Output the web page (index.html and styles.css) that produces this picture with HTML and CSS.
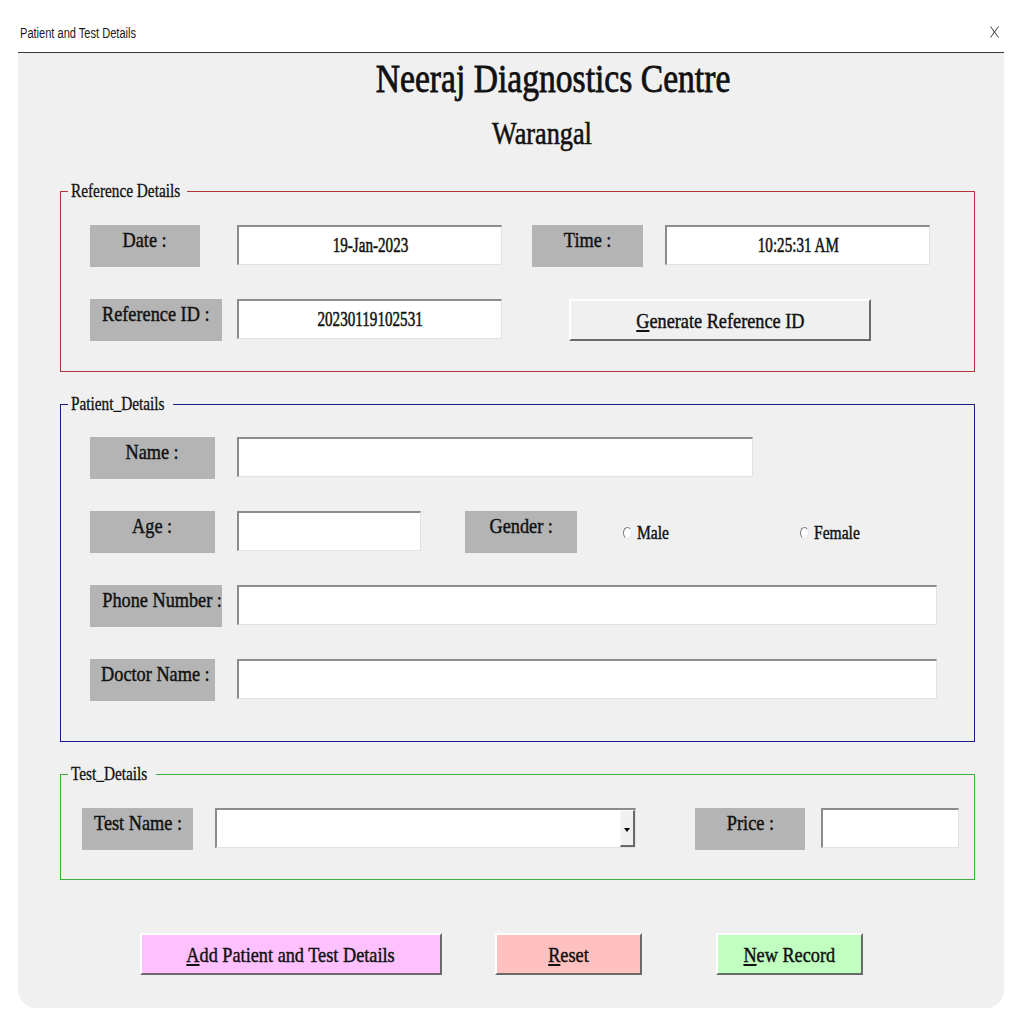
FILE: index.html
```html
<!DOCTYPE html>
<html>
<head>
<meta charset="utf-8">
<title>Patient and Test Details</title>
<link rel="stylesheet" href="styles.css">
</head>
<body>
<div class="window">
  <div class="titlebar">
    <span class="wtitle"><span class="c cl">Patient and Test Details</span></span>
    <svg class="close" width="9" height="12" viewBox="0 0 9 12"><path d="M0.5 0.5 L8.5 11.5 M8.5 0.5 L0.5 11.5" stroke="#333" stroke-width="1" fill="none"/></svg>
  </div>
  <div class="panel">
    <div class="heading"><span class="c">Neeraj Diagnostics Centre</span></div>
    <div class="sub"><span class="c">Warangal</span></div>

    <div class="group g1">
      <span class="legend lg1"><span class="c cl">Reference Details</span></span>
      <div class="row">
        <div class="lbl w110"><span class="c">Date :</span></div>
        <div class="inp ml37 w265"><span class="c ci">19-Jan-2023</span></div>
        <div class="lbl ml30 w111"><span class="c">Time :</span></div>
        <div class="inp ml22 w265"><span class="c ci">10:25:31 AM</span></div>
      </div>
      <div class="row">
        <div class="lbl w132"><span class="c">Reference ID :</span></div>
        <div class="inp ml15 w265"><span class="c ci">20230119102531</span></div>
        <div class="btn ml67 w302"><span class="c"><u>G</u>enerate Reference ID</span></div>
      </div>
    </div>

    <div class="group g2">
      <span class="legend lg2"><span class="c cl">Patient_Details</span></span>
      <div class="row">
        <div class="lbl w125"><span class="c">Name :</span></div>
        <div class="inp ml22 w516"></div>
      </div>
      <div class="row">
        <div class="lbl w125"><span class="c">Age :</span></div>
        <div class="inp ml22 w184"></div>
        <div class="lbl ml44 w112"><span class="c">Gender :</span></div>
        <div class="radio ml46 wr1"><span class="dot"></span><span class="rtext"><span class="c cl">Male</span></span></div>
        <div class="radio"><span class="dot"></span><span class="rtext"><span class="c cl">Female</span></span></div>
      </div>
      <div class="row">
        <div class="lbl w132"><span class="c">Phone Number :</span></div>
        <div class="inp ml15 w700"></div>
      </div>
      <div class="row">
        <div class="lbl w125"><span class="c">Doctor Name :</span></div>
        <div class="inp ml22 w700"></div>
      </div>
    </div>

    <div class="group g3">
      <span class="legend lg3"><span class="c cl">Test_Details</span></span>
      <div class="row">
        <div class="lbl w111"><span class="c">Test Name :</span></div>
        <div class="inp combo ml22 w421"><span class="ddbtn"><span class="tri"></span></span></div>
        <div class="lbl ml59 w110"><span class="c">Price :</span></div>
        <div class="inp ml16 w138"></div>
      </div>
    </div>

    <div class="actions">
      <div class="btn pink w302"><span class="c"><u>A</u>dd Patient and Test Details</span></div>
      <div class="btn rose ml53 w147"><span class="c"><u>R</u>eset</span></div>
      <div class="btn mint ml74 w147"><span class="c"><u>N</u>ew Record</span></div>
    </div>
  </div>
</div>
</body>
</html>
```

FILE: styles.css
```css
html, body {
  margin: 0;
  padding: 0;
  background: #ffffff;
}
body {
  font-family: "Liberation Serif", "Times New Roman", serif;
  color: #111;
}
.c {
  display: inline-block;
  white-space: nowrap;
  transform: scaleX(0.85);
  transform-origin: center;
}
.cl { transform-origin: left center; }

.window {
  margin-left: 18px;
  width: 986px;
}
.titlebar {
  height: 52px;
  border-bottom: 1px solid #3a3a3a;
  display: flex;
  justify-content: space-between;
  align-items: flex-start;
}
.wtitle {
  font-family: "Liberation Sans", Arial, sans-serif;
  font-size: 14px;
  line-height: 16px;
  margin: 25px 0 0 2px;
  color: #1a1a1a;
}
.wtitle .c { transform: scaleX(0.79); }
.close {
  margin: 26px 5px 0 0;
}

.panel {
  background: #f0f0f0;
  height: 955px;
  box-sizing: border-box;
  padding-top: 4px;
  border-radius: 0 0 18px 18px;
  overflow: hidden;
}
.heading {
  font-size: 40px;
  line-height: 44px;
  text-align: center;
  padding-left: 85px;
  -webkit-text-stroke: 0.8px #111;
}
.heading .c { transform: scaleX(0.84); }
.sub {
  font-size: 32px;
  line-height: 36px;
  margin-top: 14px;
  text-align: center;
  padding-left: 61px;
  -webkit-text-stroke: 0.6px #111;
}
.sub .c { transform: scaleX(0.82); }

.group {
  position: relative;
  margin-left: 42px;
  width: 915px;
  box-sizing: border-box;
  border: 1px solid;
  display: flex;
  flex-direction: column;
  gap: 32px;
}
.g1 {
  margin-top: 40px;
  height: 181px;
  border-color: #b3343a;
  padding: 33px 0 0 29px;
}
.g2 {
  margin-top: 32px;
  height: 338px;
  border-color: #1c1c86;
  padding: 32px 0 0 29px;
}
.g3 {
  margin-top: 32px;
  height: 106px;
  border-color: #3cae3c;
  padding: 33px 0 0 21px;
}
.legend {
  position: absolute;
  top: -11px;
  left: 7px;
  padding: 0 3px;
  background: #f0f0f0;
  font-size: 18px;
  line-height: 20px;
  white-space: nowrap;
  -webkit-text-stroke: 0.3px #111;
}
.legend .c { transform: scaleX(0.85); }
.lg1 { width: 113px; }
.lg2 { width: 99px; }
.lg3 { width: 82px; }

.row {
  display: flex;
  align-items: flex-start;
  height: 42px;
}
.lbl {
  flex: none;
  height: 42px;
  box-sizing: border-box;
  padding-top: 2px;
  background: #b4b4b4;
  text-align: center;
  font-size: 22px;
  line-height: 26px;
  color: #111;
  -webkit-text-stroke: 0.45px #111;
}
.lbl .c { transform: scaleX(0.83); }
.inp {
  flex: none;
  height: 40px;
  box-sizing: border-box;
  background: #ffffff;
  border-style: solid;
  border-width: 2px 1px 1px 2px;
  border-color: #8c8c8c #e2e2e2 #e2e2e2 #8c8c8c;
  display: flex;
  align-items: center;
  justify-content: center;
  font-size: 21px;
  color: #111;
  -webkit-text-stroke: 0.55px #111;
}
.ci { transform: scaleX(0.72); }

.combo {
  justify-content: flex-end;
  align-items: stretch;
}
.ddbtn {
  width: 15px;
  box-sizing: border-box;
  background: #f0f0f0;
  border-style: solid;
  border-width: 1px 2px 2px 1px;
  border-color: #fafafa #6a6a6a #6a6a6a #fafafa;
  display: flex;
  align-items: center;
  justify-content: center;
}
.tri {
  width: 0;
  height: 0;
  border-left: 3px solid transparent;
  border-right: 3px solid transparent;
  border-top: 4px solid #000;
  margin-top: 4px;
}

.radio {
  flex: none;
  height: 42px;
  display: flex;
  align-items: center;
  padding-top: 2px;
  box-sizing: border-box;
  font-size: 19px;
  -webkit-text-stroke: 0.45px #111;
}
.wr1 { width: 177px; }
.dot {
  width: 9px;
  height: 12px;
  box-sizing: border-box;
  border-radius: 50%;
  border: 1px solid;
  border-color: #7a7a7a #e6e6e6 #e6e6e6 #7a7a7a;
  background: #fff;
  margin-right: 5px;
}
.rtext { line-height: 20px; }
.rtext .c { transform: scaleX(0.82); }

.btn {
  flex: none;
  height: 42px;
  box-sizing: border-box;
  border-style: solid;
  border-width: 2px;
  border-color: #ffffff #6a6a6a #6a6a6a #ffffff;
  background: #f0f0f0;
  display: flex;
  align-items: center;
  justify-content: center;
  padding-top: 2px;
  font-size: 22px;
  color: #111;
  -webkit-text-stroke: 0.45px #111;
}
.btn .c { transform: scaleX(0.83); }
.btn u { text-underline-offset: 2px; }
.pink { background: #ffc0ff; }
.rose { background: #ffc0c0; }
.mint { background: #c0ffc0; }

.actions {
  display: flex;
  margin-top: 53px;
  padding-left: 122px;
}

.ml15 { margin-left: 15px; }
.ml16 { margin-left: 16px; }
.ml22 { margin-left: 22px; }
.ml30 { margin-left: 30px; }
.ml37 { margin-left: 37px; }
.ml44 { margin-left: 44px; }
.ml46 { margin-left: 46px; }
.ml53 { margin-left: 53px; }
.ml59 { margin-left: 59px; }
.ml67 { margin-left: 67px; }
.ml74 { margin-left: 74px; }

.w110 { width: 110px; }
.w111 { width: 111px; }
.w112 { width: 112px; }
.w125 { width: 125px; }
.w132 { width: 132px; }
.w138 { width: 138px; }
.w147 { width: 147px; }
.w184 { width: 184px; }
.w265 { width: 265px; }
.w302 { width: 302px; }
.w421 { width: 421px; }
.w516 { width: 516px; }
.w700 { width: 700px; }
```
